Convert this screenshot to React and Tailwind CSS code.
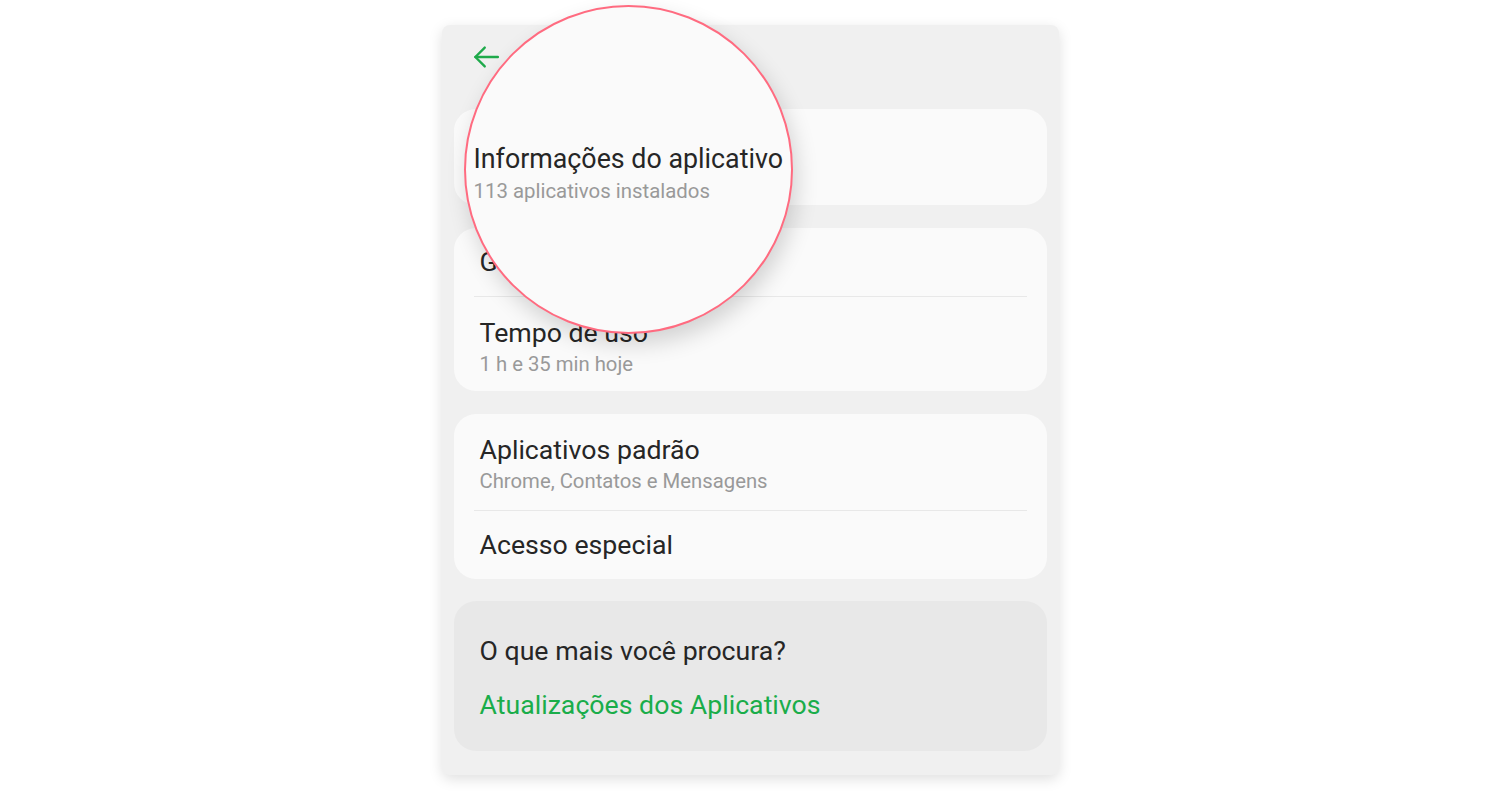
export default function App() {
  return (
    <div className="min-h-screen bg-white pt-[25px]" style={{ fontFamily: "Roboto, 'Noto Sans', sans-serif" }}>
      <div className="relative mx-auto w-[617px] h-[750px] rounded-[8px] bg-[#f0f0f0] shadow-[0_4px_14px_rgba(0,0,0,0.13)] px-3">
        {/* header */}
        <div className="h-[84px] flex items-start pt-[17px] pl-[17px]">
          <svg width="30" height="30" viewBox="0 0 24 24" fill="none" stroke="#1faa4b" strokeWidth="1.9" strokeLinecap="round" strokeLinejoin="round">
            <path d="M21.5 12H3.5" />
            <path d="M11 4.5L3.5 12L11 19.5" />
          </svg>
        </div>

        <div className="flex flex-col gap-[23px]">
          {/* first card is shown through the magnifier */}
          <div className="rounded-[22px] bg-[#fafafa] h-[96px]" />

          <div className="rounded-[22px] bg-[#fafafa] h-[163px] flex flex-col">
            <div className="h-[68px] px-[26px] flex items-center text-[26.7px] text-[#262626]">Gerenciar aplicativos</div>
            <div className="mx-[20px] h-px bg-[#e8e8e8]" />
            <div className="px-[26px] pt-[18px]">
              <div className="text-[26.7px] leading-[36px] text-[#262626]">Tempo de uso</div>
              <div className="text-[20.3px] leading-[26px] text-[#999]">1 h e 35 min hoje</div>
            </div>
          </div>

          <div className="rounded-[22px] bg-[#fafafa] h-[165px] flex flex-col">
            <div className="h-[96px] px-[26px] pt-[18px]">
              <div className="text-[26.7px] leading-[36px] text-[#262626]">Aplicativos padrão</div>
              <div className="text-[20.3px] leading-[26px] text-[#999]">Chrome, Contatos e Mensagens</div>
            </div>
            <div className="mx-[20px] h-px bg-[#e8e8e8]" />
            <div className="flex-1 px-[26px] flex items-center text-[26.7px] text-[#262626]">Acesso especial</div>
          </div>

          <div className="rounded-[22px] bg-[#e8e8e8] h-[150px] px-[26px] pt-[32px] flex flex-col gap-[18px] mt-[-1px]">
            <div className="text-[26.7px] leading-[36px] text-[#262626]">O que mais você procura?</div>
            <div className="text-[26.7px] leading-[36px] text-[#1aad4a]">Atualizações dos Aplicativos</div>
          </div>
        </div>

        {/* magnifier */}
        <div className="absolute left-[22px] top-[-20px] w-[329px] h-[329px] rounded-full bg-[#fafafa] border-2 border-[#ff6b80] shadow-[4px_10px_22px_rgba(0,0,0,0.16)] overflow-hidden">
          <div className="absolute left-[8px] top-[134px] whitespace-nowrap">
            <div className="text-[26.8px] leading-[36px] text-[#262626]">Informações do aplicativo</div>
            <div className="text-[20.4px] leading-[26px] text-[#999] mt-px">113 aplicativos instalados</div>
          </div>
        </div>
      </div>
    </div>
  );
}
